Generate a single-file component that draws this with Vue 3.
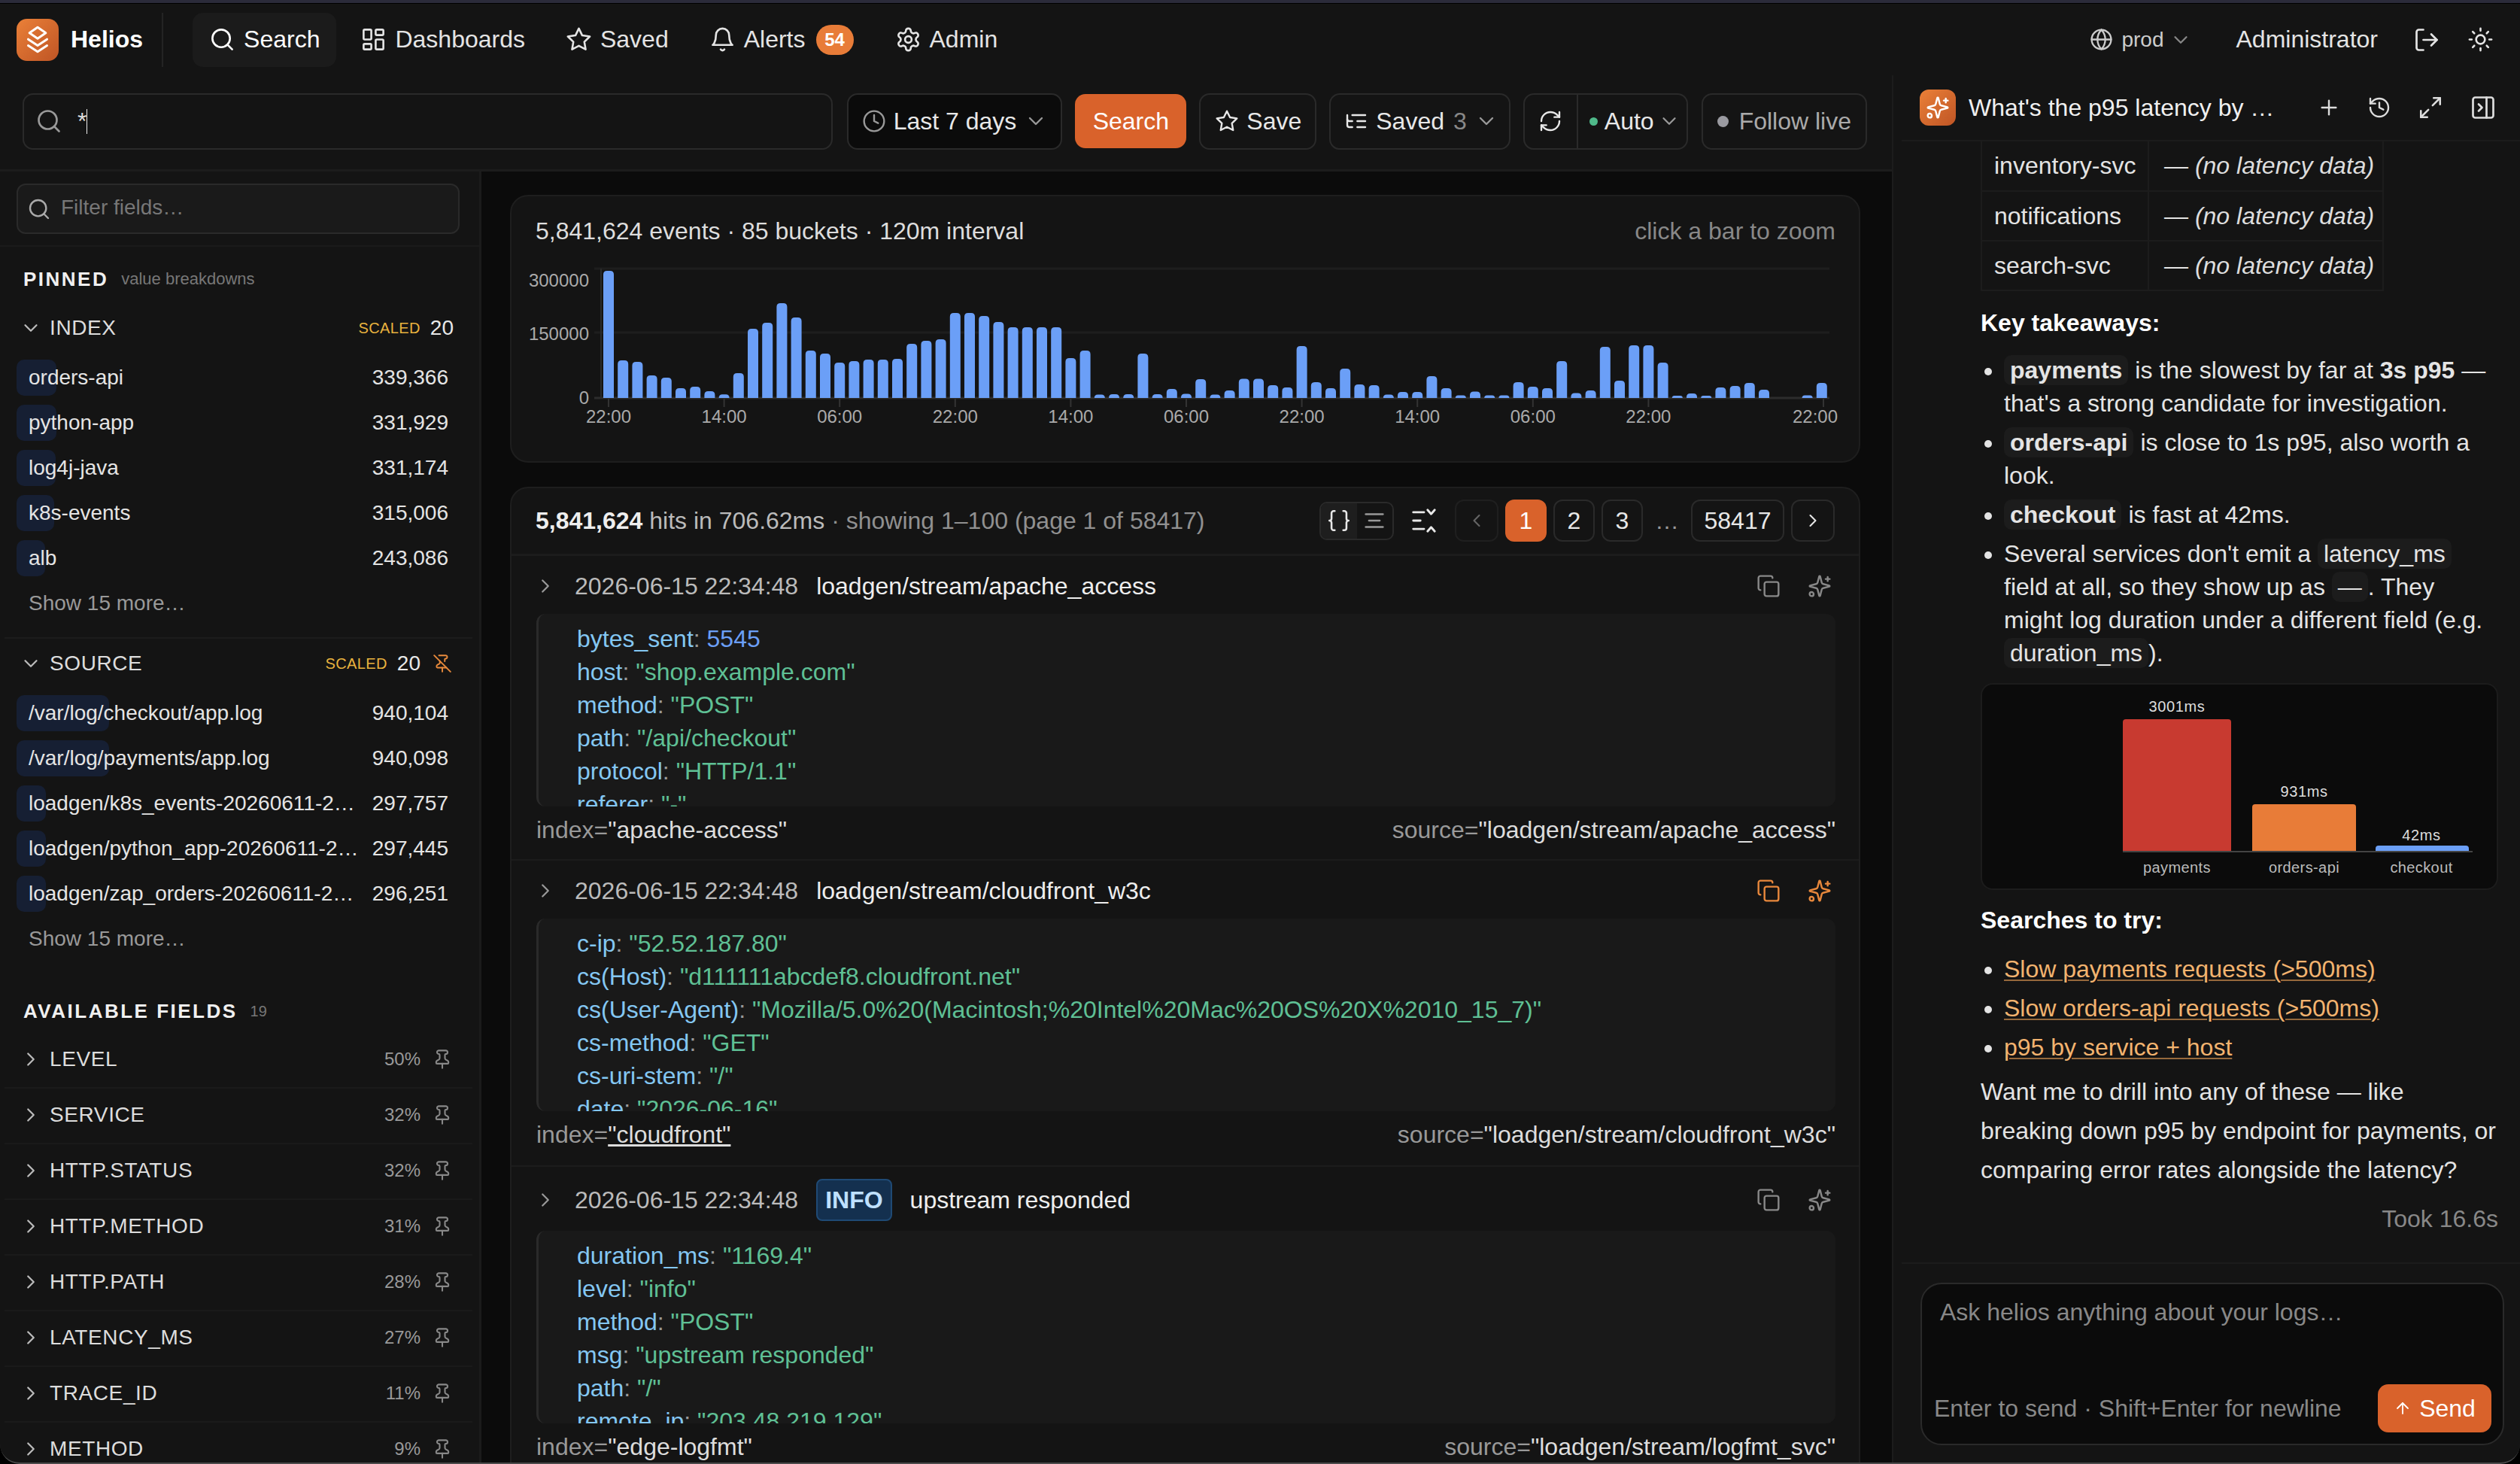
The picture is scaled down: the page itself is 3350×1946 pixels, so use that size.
<template>
    <div class="app">
        <div class="strip"></div>
        <header class="topbar">
            <div class="logo"><Icon name="layers" :size="40" color="#fff" /></div>
            <span class="brand">Helios</span>
            <span class="brand-sep"></span>
            <nav class="nav">
                <a v-for="item in navItems" :key="item.label" class="nav-item" :class="{ active: item.active }">
                    <Icon :name="item.icon" :size="35" />
                    <span>{{ item.label }}</span>
                    <span v-if="item.badge" class="nav-badge">{{ item.badge }}</span>
                </a>
            </nav>
            <div class="topbar-right">
                <span class="env"><Icon name="globe" :size="31" /><span class="env-name">prod</span><Icon name="chevronDown" :size="30" color="#888" /></span>
                <span class="user">Administrator</span>
                <Icon name="logout" :size="36" />
                <Icon name="sun" :size="35" />
            </div>
        </header>

        <div class="workspace">
            <div class="left">
                <div class="searchbar">
                    <div class="query">
                        <Icon name="search" :size="36" color="#999" />
                        <span class="query-text">*</span><span class="caret"></span>
                    </div>
                    <button class="btn dark"><Icon name="clock" :size="32" color="#999" />Last 7 days<Icon name="chevronDown" :size="32" color="#999" /></button>
                    <button class="btn primary">Search</button>
                    <button class="btn save"><Icon name="star" :size="32" />Save</button>
                    <button class="btn saved"><Icon name="listTree" :size="32" />Saved <span class="muted">3</span><Icon name="chevronDown" :size="32" color="#999" /></button>
                    <div class="btn-group">
                        <button class="btn-part"><Icon name="refresh" :size="32" /></button>
                        <button class="btn-part"><i class="dot green"></i>Auto<Icon name="chevronDown" :size="30" color="#999" class-name="auto-chev" /></button>
                    </div>
                    <button class="btn follow"><i class="dot grey"></i>Follow live</button>
                </div>

                <div class="columns">
                    <aside class="sidebar">
                        <div class="filter-wrap">
                            <div class="filter"><Icon name="search" :size="32" color="#aaa" /><span>Filter fields…</span></div>
                        </div>
                        <div class="side-title pinned"><b>PINNED</b><span>value breakdowns</span></div>
                        <template v-for="(group, gi) in pinnedGroups" :key="group.name">
                            <section class="group">
                                <div class="group-head">
                                    <Icon name="chevronDown" :size="30" color="#bbb" />
                                    <span class="field-name">{{ group.name }}</span>
                                    <span class="scaled">SCALED</span>
                                    <span class="group-count">20</span>
                                    <Icon v-if="group.unpin" name="pinOff" :size="26" color="#e88a3c" class-name="unpin" />
                                </div>
                                <div class="value-list">
                                    <div v-for="row in group.rows" :key="row.name" class="value-row">
                                        <i class="value-bar" :style="{ width: row.bar + 'px' }"></i>
                                        <span class="value-name">{{ row.name }}</span>
                                        <span class="value-count">{{ row.count }}</span>
                                    </div>
                                    <div class="show-more">Show 15 more…</div>
                                </div>
                            </section>
                            <div v-if="gi === 0" class="group-rule"></div>
                        </template>
                        <div class="side-title available"><b>AVAILABLE FIELDS</b><span class="small-count">19</span></div>
                        <div class="fields">
                            <div v-for="f in fields" :key="f.name" class="field-row">
                                <Icon name="chevronRight" :size="30" color="#bbb" />
                                <span class="field-name">{{ f.name }}</span>
                                <span class="field-pct">{{ f.pct }}</span>
                                <Icon name="pin" :size="28" color="#888" />
                            </div>
                        </div>
                    </aside>

                    <main class="main">
                        <section class="card histogram">
                            <div class="hist-head">
                                <span>5,841,624 events · 85 buckets · 120m interval</span>
                                <span class="hist-hint">click a bar to zoom</span>
                            </div>
                            <svg class="hist-svg" width="1791" height="262" viewBox="680 340 1791 262">
                                <line x1="790" x2="2432" y1="357" y2="357" stroke="#1e1e1e" stroke-width="3" />
                                <line x1="790" x2="2432" y1="442" y2="442" stroke="#1e1e1e" stroke-width="3" />
                                <line x1="799" x2="799" y1="357" y2="529" stroke="#2a2a2a" stroke-width="2" />
                                <line x1="790" x2="2432" y1="529" y2="529" stroke="#2c2c2c" stroke-width="3" />
                                <line v-for="t in xTicks" :key="'t' + t.tick" :x1="t.tick" :x2="t.tick" y1="530" y2="541" stroke="#333" stroke-width="2" />
                                <path v-for="(d, i) in barPaths" :key="i" :d="d" fill="#6b9ff7" />
                                <text v-for="l in yLabels" :key="l.text" x="783" :y="l.y" class="axis-text" text-anchor="end">{{ l.text }}</text>
                                <text v-for="t in xTicks" :key="'l' + t.tick" :x="t.x" y="562" class="axis-text" text-anchor="middle">{{ t.label }}</text>
                            </svg>
                        </section>

                        <section class="card results">
                            <div class="results-head">
                                <span class="hits"><b>5,841,624</b> hits in 706.62ms<span class="dim"> · showing 1–100 (page 1 of 58417)</span></span>
                                <div class="view-toggle">
                                    <span class="on"><Icon name="braces" :size="34" /></span>
                                    <span><Icon name="lines" :size="34" color="#999" /></span>
                                </div>
                                <Icon name="collapse" :size="38" class-name="collapse" />
                                <div class="pager">
                                    <span class="page arrow dim-arrow"><Icon name="chevronLeft" :size="28" color="#666" /></span>
                                    <span class="page current">1</span>
                                    <span class="page">2</span>
                                    <span class="page">3</span>
                                    <span class="gap">…</span>
                                    <span class="page wide">58417</span>
                                    <span class="page arrow"><Icon name="chevronRight" :size="28" /></span>
                                </div>
                            </div>

                            <article v-for="e in entries" :key="e.index" class="entry" :class="{ hover: e.hover, tall: e.level }">
                                <div class="entry-head">
                                    <Icon name="chevronRight" :size="30" color="#999" />
                                    <span class="stamp">2026-06-15 22:34:48</span>
                                    <span v-if="e.level" class="level">{{ e.level }}</span>
                                    <span class="entry-title">{{ e.title }}</span>
                                    <span class="entry-actions">
                                        <Icon name="copy" :size="32" />
                                        <Icon name="sparkle" :size="32" />
                                    </span>
                                </div>
                                <div class="entry-body">
                                    <div v-for="line in e.lines" :key="line[0]" class="kv">
                                        <span class="k">{{ line[0] }}</span><span class="colon">: </span><span :class="line[2] ? 'num' : 'str'">{{ line[1] }}</span>
                                    </div>
                                </div>
                                <div class="entry-foot">
                                    <span>index=<em class="idx">"{{ e.index }}"</em></span>
                                    <span>source=<em>"{{ e.source }}"</em></span>
                                </div>
                            </article>
                        </section>
                    </main>
                </div>
            </div>

            <aside class="assistant">
                <div class="ai-head">
                    <div class="ai-logo"><Icon name="sparkle" :size="32" color="#fff" /></div>
                    <span class="ai-title">What's the p95 latency by …</span>
                    <span class="ai-tools">
                        <Icon name="plus" :size="32" />
                        <Icon name="history" :size="32" />
                        <Icon name="expand" :size="34" />
                        <Icon name="panelRight" :size="36" />
                    </span>
                </div>
                <div class="ai-body">
                    <table class="ai-table">
                        <tr v-for="s in noLatency" :key="s">
                            <td class="svc">{{ s }}</td>
                            <td class="nodata">— <em>(no latency data)</em></td>
                        </tr>
                    </table>
                    <h4 class="ai-h first">Key takeaways:</h4>
                    <ul class="ai-list">
                        <li><code class="strong">payments</code> is the slowest by far at <b>3s p95</b> — that's a strong candidate for investigation.</li>
                        <li><code class="strong">orders-api</code> is close to 1s p95, also worth a look.</li>
                        <li><code class="strong">checkout</code> is fast at 42ms.</li>
                        <li>Several services don't emit a <code>latency_ms</code> field at all, so they show up as <code>—</code>. They might log duration under a different field (e.g. <code>duration_ms</code>).</li>
                    </ul>
                    <div class="ai-chart">
                        <svg width="684" height="271" viewBox="2635 909 684 271">
                            <path d="M2822 1131V959a4 4 0 0 1 4-4H2962a4 4 0 0 1 4 4V1131Z" fill="#c83a30" />
                            <path d="M2994 1131V1072a4 4 0 0 1 4-4H3128a4 4 0 0 1 4 4V1131Z" fill="#e87c38" />
                            <path d="M3158 1131V1127a4 4 0 0 1 4-4H3278a4 4 0 0 1 4 4V1131Z" fill="#6b9ff7" />
                            <line x1="2822" x2="3287" y1="1131" y2="1131" stroke="#444" stroke-width="2" />
                            <text v-for="b in aiBars" :key="b.name" :x="b.x" :y="b.top" class="ai-val" text-anchor="middle">{{ b.value }}</text>
                            <text v-for="b in aiBars" :key="'n' + b.name" :x="b.x" y="1159" class="ai-cat" text-anchor="middle">{{ b.name }}</text>
                        </svg>
                    </div>
                    <h4 class="ai-h">Searches to try:</h4>
                    <ul class="ai-list links">
                        <li v-for="l in links" :key="l"><a>{{ l }}</a></li>
                    </ul>
                    <p class="ai-closing">Want me to drill into any of these — like breaking down p95 by endpoint for payments, or comparing error rates alongside the latency?</p>
                    <div class="took">Took 16.6s</div>
                </div>
                <div class="ai-compose">
                    <div class="composer">
                        <div class="placeholder">Ask helios anything about your logs…</div>
                        <div class="composer-foot">
                            <span>Enter to send · Shift+Enter for newline</span>
                            <button class="send"><Icon name="arrowUp" :size="24" />Send</button>
                        </div>
                    </div>
                </div>
            </aside>
        </div>
        <div class="frame"></div>
    </div>
</template>

<script setup>
import { h } from 'vue'

const icons = {
    layers: '<path d="M12 2 5.5 6.5 12 11l6.5-4.5z"/><path d="m4.5 11.5 7.5 5 7.5-5"/><path d="m4.5 16.5 7.5 5 7.5-5"/>',
    search: '<circle cx="11" cy="11" r="8"/><path d="m21 21-4.3-4.3"/>',
    dashboard: '<rect width="7" height="9" x="3" y="3" rx="1"/><rect width="7" height="5" x="14" y="3" rx="1"/><rect width="7" height="9" x="14" y="12" rx="1"/><rect width="7" height="5" x="3" y="16" rx="1"/>',
    star: '<polygon points="12 2 15.09 8.26 22 9.27 17 14.14 18.18 21.02 12 17.77 5.82 21.02 7 14.14 2 9.27 8.91 8.26"/>',
    bell: '<path d="M6 8a6 6 0 0 1 12 0c0 7 3 9 3 9H3s3-2 3-9"/><path d="M10.3 21a1.94 1.94 0 0 0 3.4 0"/>',
    gear: '<path d="M12.22 2h-.44a2 2 0 0 0-2 2v.18a2 2 0 0 1-1 1.73l-.43.25a2 2 0 0 1-2 0l-.15-.08a2 2 0 0 0-2.73.73l-.22.38a2 2 0 0 0 .73 2.73l.15.1a2 2 0 0 1 1 1.72v.51a2 2 0 0 1-1 1.74l-.15.09a2 2 0 0 0-.73 2.73l.22.38a2 2 0 0 0 2.73.73l.15-.08a2 2 0 0 1 2 0l.43.25a2 2 0 0 1 1 1.73V20a2 2 0 0 0 2 2h.44a2 2 0 0 0 2-2v-.18a2 2 0 0 1 1-1.73l.43-.25a2 2 0 0 1 2 0l.15.08a2 2 0 0 0 2.73-.73l.22-.39a2 2 0 0 0-.73-2.73l-.15-.08a2 2 0 0 1-1-1.74v-.5a2 2 0 0 1 1-1.74l.15-.09a2 2 0 0 0 .73-2.73l-.22-.38a2 2 0 0 0-2.73-.73l-.15.08a2 2 0 0 1-2 0l-.43-.25a2 2 0 0 1-1-1.73V4a2 2 0 0 0-2-2z"/><circle cx="12" cy="12" r="3"/>',
    globe: '<circle cx="12" cy="12" r="10"/><path d="M12 2a14.5 14.5 0 0 0 0 20 14.5 14.5 0 0 0 0-20"/><path d="M2 12h20"/>',
    chevronDown: '<path d="m6 9 6 6 6-6"/>',
    chevronRight: '<path d="m9 18 6-6-6-6"/>',
    chevronLeft: '<path d="m15 18-6-6 6-6"/>',
    logout: '<path d="M9 21H5a2 2 0 0 1-2-2V5a2 2 0 0 1 2-2h4"/><path d="m16 17 5-5-5-5"/><path d="M21 12H9"/>',
    sun: '<circle cx="12" cy="12" r="4"/><path d="M12 2v2"/><path d="M12 20v2"/><path d="m4.93 4.93 1.41 1.41"/><path d="m17.66 17.66 1.41 1.41"/><path d="M2 12h2"/><path d="M20 12h2"/><path d="m6.34 17.66-1.41 1.41"/><path d="m19.07 4.93-1.41 1.41"/>',
    clock: '<circle cx="12" cy="12" r="10"/><path d="M12 6v6l4 2"/>',
    listTree: '<path d="M21 12h-8"/><path d="M21 6H8"/><path d="M21 18h-8"/><path d="M3 6v4c0 1.1.9 2 2 2h3"/><path d="M3 10v6c0 1.1.9 2 2 2h3"/>',
    refresh: '<path d="M3 12a9 9 0 0 1 9-9 9.75 9.75 0 0 1 6.74 2.74L21 8"/><path d="M21 3v5h-5"/><path d="M21 12a9 9 0 0 1-9 9 9.75 9.75 0 0 1-6.74-2.74L3 16"/><path d="M8 16H3v5"/>',
    pin: '<path d="M12 17v5"/><path d="M9 10.76a2 2 0 0 1-1.11 1.79l-1.78.9A2 2 0 0 0 5 15.24V16a1 1 0 0 0 1 1h12a1 1 0 0 0 1-1v-.76a2 2 0 0 0-1.11-1.79l-1.78-.9A2 2 0 0 1 15 10.76V7a1 1 0 0 1 1-1 2 2 0 0 0 0-4H8a2 2 0 0 0 0 4 1 1 0 0 1 1 1z"/>',
    pinOff: '<path d="M12 17v5"/><path d="M15 9.34V7a1 1 0 0 1 1-1 2 2 0 0 0 0-4H7.89"/><path d="m2 2 20 20"/><path d="M9 9v1.76a2 2 0 0 1-1.11 1.79l-1.78.9A2 2 0 0 0 5 15.24V16a1 1 0 0 0 1 1h11"/>',
    braces: '<path d="M8 3H7a2 2 0 0 0-2 2v5a2 2 0 0 1-2 2 2 2 0 0 1 2 2v5c0 1.1.9 2 2 2h1"/><path d="M16 21h1a2 2 0 0 0 2-2v-5c0-1.1.9-2 2-2a2 2 0 0 1-2-2V5a2 2 0 0 0-2-2h-1"/>',
    lines: '<path d="M4 6h16"/><path d="M7 12h10"/><path d="M4 18h16"/>',
    collapse: '<path d="M3 5h9"/><path d="M3 12h6"/><path d="M3 19h9"/><path d="m15 3 3 3.5L21 3"/><path d="m15 21 3-3.5 3 3.5"/>',
    copy: '<rect width="14" height="14" x="8" y="8" rx="2"/><path d="M4 16c-1.1 0-2-.9-2-2V4c0-1.1.9-2 2-2h10c1.1 0 2 .9 2 2"/>',
    sparkle: '<path d="M9.937 15.5A2 2 0 0 0 8.5 14.063l-6.135-1.582a.5.5 0 0 1 0-.962L8.5 9.936A2 2 0 0 0 9.937 8.5l1.582-6.135a.5.5 0 0 1 .963 0L14.063 8.5A2 2 0 0 0 15.5 9.937l6.135 1.581a.5.5 0 0 1 0 .964L15.5 14.063a2 2 0 0 0-1.437 1.437l-1.582 6.135a.5.5 0 0 1-.963 0z"/><path d="M20 3v4"/><path d="M22 5h-4"/><circle cx="4" cy="20" r="2"/>',
    plus: '<path d="M5 12h14"/><path d="M12 5v14"/>',
    history: '<path d="M3 12a9 9 0 1 0 9-9 9.75 9.75 0 0 0-6.74 2.74L3 8"/><path d="M3 3v5h5"/><path d="M12 7v5l4 2"/>',
    expand: '<path d="M15 3h6v6"/><path d="M9 21H3v-6"/><path d="m21 3-7 7"/><path d="m3 21 7-7"/>',
    panelRight: '<rect width="18" height="18" x="3" y="3" rx="2"/><path d="M15 3v18"/><path d="m8 9 3 3-3 3"/>',
    arrowUp: '<path d="M12 19V5"/><path d="m5 12 7-7 7 7"/>'
}

// small helper so every lucide-style glyph comes out the same way
const Icon = (props) => h('svg', {
    class: ['ico', props.className],
    width: props.size,
    height: props.size,
    viewBox: '0 0 24 24',
    fill: 'none',
    stroke: props.color || 'currentColor',
    'stroke-width': 1.8,
    'stroke-linecap': 'round',
    'stroke-linejoin': 'round',
    innerHTML: icons[props.name]
})
Icon.props = ['name', 'size', 'color', 'className']

const navItems = [
    { label: 'Search', icon: 'search', active: true },
    { label: 'Dashboards', icon: 'dashboard' },
    { label: 'Saved', icon: 'star' },
    { label: 'Alerts', icon: 'bell', badge: 54 },
    { label: 'Admin', icon: 'gear' }
]

const pinnedGroups = [
    {
        name: 'INDEX',
        rows: [
            { name: 'orders-api', count: '339,366', bar: 53 },
            { name: 'python-app', count: '331,929', bar: 53 },
            { name: 'log4j-java', count: '331,174', bar: 52 },
            { name: 'k8s-events', count: '315,006', bar: 50 },
            { name: 'alb', count: '243,086', bar: 38 }
        ]
    },
    {
        name: 'SOURCE',
        unpin: true,
        rows: [
            { name: '/var/log/checkout/app.log', count: '940,104', bar: 123 },
            { name: '/var/log/payments/app.log', count: '940,098', bar: 123 },
            { name: 'loadgen/k8s_events-20260611-2…', count: '297,757', bar: 39 },
            { name: 'loadgen/python_app-20260611-2…', count: '297,445', bar: 39 },
            { name: 'loadgen/zap_orders-20260611-2…', count: '296,251', bar: 39 }
        ]
    }
]

const fields = [
    { name: 'LEVEL', pct: '50%' },
    { name: 'SERVICE', pct: '32%' },
    { name: 'HTTP.STATUS', pct: '32%' },
    { name: 'HTTP.METHOD', pct: '31%' },
    { name: 'HTTP.PATH', pct: '28%' },
    { name: 'LATENCY_MS', pct: '27%' },
    { name: 'TRACE_ID', pct: '11%' },
    { name: 'METHOD', pct: '9%' }
]

// bar heights in px, read off the histogram
const heights = [169, 50, 48, 30, 27, 13, 15, 9, 4.7, 33, 92, 100, 126, 107, 63, 59, 47, 49, 51, 51, 52, 72, 76, 78, 113, 113, 109, 101, 94, 94, 94, 94, 53, 63, 4.5, 5, 5, 59, 5, 12, 5.5, 25, 4.5, 10, 25.5, 25.5, 17, 14, 69, 21, 13, 39, 18, 17, 4.5, 8, 8, 29, 13, 3.5, 8.5, 3.5, 3.5, 21, 15, 13, 49, 6.5, 10, 68, 23, 70, 70, 47, 3, 6, 3, 14, 16, 20, 11, 0, 0, 3.5, 20]
const barPaths = heights.map((bh, i) => {
    const x = 802 + i * 19.2
    const top = 529 - bh
    const r = Math.min(5, bh)
    return `M${x} 529V${top + r}Q${x} ${top} ${x + r} ${top}H${x + 14 - r}Q${x + 14} ${top} ${x + 14} ${top + r}V529Z`
})
const yLabels = [{ text: '300000', y: 381 }, { text: '150000', y: 452 }, { text: '0', y: 537 }]
const xTicks = ['22:00', '14:00', '06:00', '22:00', '14:00', '06:00', '22:00', '14:00', '06:00', '22:00', '22:00'].map((label, i) => {
    const tick = i < 10 ? 809 + i * 153.6 : 2424
    return { label, tick, x: i < 10 ? tick : 2413 }
})

const entries = [
    {
        title: 'loadgen/stream/apache_access',
        index: 'apache-access',
        source: 'loadgen/stream/apache_access',
        lines: [['bytes_sent', '5545', true], ['host', '"shop.example.com"'], ['method', '"POST"'], ['path', '"/api/checkout"'], ['protocol', '"HTTP/1.1"'], ['referer', '"-"']]
    },
    {
        title: 'loadgen/stream/cloudfront_w3c',
        index: 'cloudfront',
        source: 'loadgen/stream/cloudfront_w3c',
        hover: true,
        lines: [['c-ip', '"52.52.187.80"'], ['cs(Host)', '"d111111abcdef8.cloudfront.net"'], ['cs(User-Agent)', '"Mozilla/5.0%20(Macintosh;%20Intel%20Mac%20OS%20X%2010_15_7)"'], ['cs-method', '"GET"'], ['cs-uri-stem', '"/"'], ['date', '"2026-06-16"']]
    },
    {
        title: 'upstream responded',
        level: 'INFO',
        index: 'edge-logfmt',
        source: 'loadgen/stream/logfmt_svc',
        lines: [['duration_ms', '"1169.4"'], ['level', '"info"'], ['method', '"POST"'], ['msg', '"upstream responded"'], ['path', '"/"'], ['remote_ip', '"203.48.219.129"']]
    }
]

const noLatency = ['inventory-svc', 'notifications', 'search-svc']
const aiBars = [
    { name: 'payments', value: '3001ms', x: 2894, top: 945 },
    { name: 'orders-api', value: '931ms', x: 3063, top: 1058 },
    { name: 'checkout', value: '42ms', x: 3219, top: 1116 }
]
const links = ['Slow payments requests (>500ms)', 'Slow orders-api requests (>500ms)', 'p95 by service + host']
</script>

<style scoped>
* {
    box-sizing: border-box;
}

.app {
    position: relative;
    width: 3350px;
    height: 1946px;
    display: flex;
    flex-direction: column;
    overflow: hidden;
    background: #141414;
    color: #e8e8e8;
    font-family: "Liberation Sans", Arial, sans-serif;
    font-size: 32px;
    border-radius: 0 0 26px 26px;
}

.frame {
    position: absolute;
    inset: 0;
    pointer-events: none;
    border-bottom: 2px solid #4a4a4a;
    border-radius: 0 0 26px 26px;
}

.strip {
    height: 5px;
    flex: none;
    background: #2b2b3a;
    border-bottom: 1px solid #000;
}

.ico {
    flex: none;
    display: block;
}

.topbar {
    height: 95px;
    flex: none;
    display: flex;
    align-items: center;
    padding: 0 35px 0 22px;
    color: #e4e4e4;
}

.logo {
    width: 56px;
    height: 56px;
    border-radius: 14px;
    background: linear-gradient(135deg, #ea8038, #bf5525);
    display: flex;
    align-items: center;
    justify-content: center;
}

.brand {
    margin-left: 16px;
    font-weight: 700;
    color: #fff;
}

.brand-sep {
    width: 2px;
    height: 72px;
    margin: 0 39px 0 25px;
    background: #242424;
}

.nav {
    display: flex;
    align-items: center;
    gap: 10px;
}

.nav-item {
    height: 72px;
    display: flex;
    align-items: center;
    gap: 11px;
    padding: 0 22px;
    border-radius: 14px;
}

.nav-item.active {
    background: #1b1b1b;
    color: #fff;
}

.nav-badge {
    min-width: 50px;
    height: 40px;
    margin: 0 1px 0 3px;
    padding: 0 10px;
    border-radius: 20px;
    background: #e87c38;
    color: #fff;
    font-size: 24px;
    font-weight: 700;
    text-align: center;
    line-height: 40px;
}

.topbar-right {
    margin-left: auto;
    display: flex;
    align-items: center;
    gap: 36px;
}

.env {
    display: flex;
    align-items: center;
    gap: 11px;
    color: #ccc;
    margin-right: 23px;
}

.env-name {
    font-size: 28px;
    margin-right: -4px;
}

.user {
    margin-right: 11px;
}

.workspace {
    flex: 1;
    min-height: 0;
    display: flex;
}

.left {
    width: 2515px;
    flex: none;
    display: flex;
    flex-direction: column;
}

.searchbar {
    height: 128px;
    flex: none;
    display: flex;
    align-items: center;
    gap: 17px;
    padding: 0 33px 3px 30px;
    border-bottom: 3px solid #1c1c1c;
}

.query {
    flex: 1;
    height: 75px;
    margin-right: 2px;
    display: flex;
    align-items: center;
    padding-left: 15px;
    border: 2px solid #2a2a2a;
    border-radius: 14px;
    background: #141414;
}

.query-text {
    margin-left: 20px;
    color: #ddd;
}

.caret {
    width: 1px;
    height: 33px;
    background: #eee;
}

.btn {
    height: 75px;
    display: flex;
    align-items: center;
    gap: 10px;
    padding: 0 17px 0 18px;
    border: 2px solid #2a2a2a;
    border-radius: 14px;
    background: #141414;
    color: #e8e8e8;
    font-family: inherit;
    font-size: 32px;
}

.btn.dark {
    background: #0b0b0b;
}

.btn.primary {
    width: 148px;
    height: 72px;
    justify-content: center;
    border: none;
    padding: 0;
    background: #d9622b;
    color: #fff;
}

.btn.save {
    padding: 0 18px 0 19px;
}

.btn.saved {
    padding: 0 14px 0 18px;
}

.btn.follow {
    gap: 14px;
    margin-left: 1px;
    padding: 0 19px;
    color: #aaa;
}

.muted {
    color: #888;
    margin-left: 2px;
}

.btn-group {
    height: 75px;
    display: flex;
    border: 2px solid #2a2a2a;
    border-radius: 14px;
}

.btn-part {
    display: flex;
    align-items: center;
    gap: 9px;
    padding: 0 8px 0 15px;
    border: none;
    background: none;
    color: #e8e8e8;
    font-family: inherit;
    font-size: 32px;
}

.btn-part:first-child {
    width: 71px;
    justify-content: center;
    padding: 0;
    border-right: 2px solid #2a2a2a;
}

.btn-part .auto-chev {
    margin-left: -4px;
}

.dot {
    flex: none;
    display: inline-block;
    border-radius: 50%;
}

.dot.green {
    width: 11px;
    height: 11px;
    background: #4fb98a;
}

.dot.grey {
    width: 15px;
    height: 15px;
    background: #9a9aa0;
}

.columns {
    flex: 1;
    min-height: 0;
    display: flex;
}

.sidebar {
    width: 640px;
    flex: none;
    overflow: hidden;
    border-right: 3px solid #1b1b1b;
    font-size: 28px;
}

.filter-wrap {
    height: 100px;
    padding: 16px 26px 0 22px;
    border-bottom: 2px solid #1a1a1a;
}

.filter {
    height: 67px;
    display: flex;
    align-items: center;
    gap: 13px;
    padding: 0 0 3px 12px;
    border: 2px solid #2a2a2a;
    border-radius: 12px;
    background: #1a1a1a;
    color: #777;
}

.filter .ico {
    margin-top: 3px;
}

.side-title {
    height: 44px;
    display: flex;
    align-items: center;
    gap: 17px;
    padding-left: 31px;
}

.side-title b {
    font-size: 26px;
    font-weight: 700;
    letter-spacing: 2.5px;
    color: #f0f0f0;
}

.side-title span {
    font-size: 22px;
    color: #777;
}

.side-title .small-count {
    font-size: 20px;
}

.pinned {
    margin-top: 21px;
}

.available {
    margin-top: 44px;
}

.group {
    margin-top: 3px;
}

.pinned + .group {
    margin-top: 13px;
}

.group-rule {
    height: 2px;
    margin: 15px 9px 0 6px;
    background: #1c1c1c;
}

.group-head {
    height: 60px;
    display: flex;
    align-items: center;
    padding: 0 34px 0 26px;
}

.field-name {
    margin-left: 10px;
    letter-spacing: .6px;
    color: #ddd;
}

.scaled {
    margin-left: auto;
    font-size: 20px;
    letter-spacing: .4px;
    color: #e8b23e;
}

.group-count {
    margin-left: 13px;
    color: #e8e8e8;
}

.group-head .unpin {
    margin-left: 16px;
    margin-right: 2px;
}

.value-list {
    margin-top: 6px;
}

.value-row {
    position: relative;
    height: 60px;
    margin: 0 27px 0 22px;
    padding: 0 14px 0 16px;
    display: flex;
    align-items: center;
    justify-content: space-between;
}

.value-bar {
    position: absolute;
    left: 0;
    top: 6px;
    height: 48px;
    border-radius: 10px;
    background: #161f33;
}

.value-name,
.value-count {
    position: relative;
    color: #e4e4e4;
    white-space: nowrap;
}

.show-more {
    height: 60px;
    padding-left: 38px;
    line-height: 60px;
    color: #999;
}

.fields {
    margin-top: 7px;
}

.field-row {
    height: 74px;
    margin: 0 9px 0 6px;
    padding: 0 26px 2px 20px;
    display: flex;
    align-items: center;
    border-bottom: 2px solid #1a1a1a;
}

.field-pct {
    margin-left: auto;
    margin-right: 15px;
    font-size: 24px;
    color: #999;
}

.main {
    flex: 1;
    min-width: 0;
    padding: 31px 42px 0 38px;
    background: #0b0b0b;
    overflow: hidden;
}

.card {
    border: 2px solid #1e1e1e;
    border-radius: 24px;
    background: #141414;
}

.histogram {
    height: 356px;
    margin-bottom: 32px;
}

.hist-head {
    height: 79px;
    padding: 14px 31px 0 32px;
    display: flex;
    justify-content: space-between;
    align-items: center;
    color: #ddd;
}

.hist-hint {
    color: #888;
}

.hist-svg {
    display: block;
}

.axis-text {
    font-size: 24px;
    fill: #aaa;
    font-family: "Liberation Sans", Arial, sans-serif;
}

.results {
    height: 1400px;
}

.results-head {
    height: 90px;
    display: flex;
    align-items: center;
    padding: 0 32px 1px;
    border-bottom: 3px solid #1c1c1c;
}

.hits {
    color: #bbb;
    margin-right: auto;
}

.hits b {
    color: #eee;
    font-weight: 700;
}

.dim {
    color: #909090;
}

.view-toggle {
    display: flex;
    width: 99px;
    height: 51px;
    border: 2px solid #2a2a2a;
    border-radius: 10px;
    overflow: hidden;
}

.view-toggle span {
    flex: 1;
    display: flex;
    align-items: center;
    justify-content: center;
}

.view-toggle .on {
    background: #1e1e1e;
}

.results-head .collapse {
    margin-left: 21px;
    margin-right: 22px;
}

.pager {
    display: flex;
    align-items: center;
    gap: 9px;
}

.page {
    min-width: 55px;
    height: 56px;
    display: flex;
    align-items: center;
    justify-content: center;
    border: 2px solid #2a2a2a;
    border-radius: 12px;
}

.page.current {
    border: none;
    background: #d9622b;
    color: #fff;
}

.page.wide {
    width: 124px;
}

.page.arrow {
    width: 58px;
}

.dim-arrow {
    border-color: #1f1f1f;
}

.gap {
    width: 46px;
    text-align: center;
    color: #999;
}

.entry {
    height: 405px;
    border-bottom: 2px solid #1c1c1c;
}

.entry + .entry {
    height: 407px;
}

.entry-head {
    height: 77px;
    display: flex;
    align-items: center;
    padding: 3px 36px 0 30px;
}

.stamp {
    margin-left: 24px;
    color: #bbb;
}

.level {
    height: 56px;
    margin-left: 24px;
    padding: 0 10px;
    display: flex;
    align-items: center;
    border: 2px solid #1f4a75;
    border-radius: 8px;
    background: #14304f;
    color: #bfe0ff;
    font-weight: 700;
}

.entry.tall .entry-head {
    height: 85px;
}

.entry-title {
    margin-left: 24px;
    color: #eee;
}

.entry-actions {
    margin-left: auto;
    display: flex;
    align-items: center;
    gap: 36px;
    color: #888;
}

.entry.hover .entry-actions {
    color: #e8883c;
}

.entry.hover .idx {
    text-decoration: underline;
}

.entry-body {
    height: 256px;
    margin: 0 31px 0 33px;
    padding: 11px 0 0 51px;
    overflow: hidden;
    border-left: 3px solid #2a2a2a;
    border-radius: 12px;
    background: #191919;
}

.kv {
    height: 44px;
    line-height: 44px;
    white-space: nowrap;
}

.k {
    color: #84c7f2;
}

.colon {
    color: #999;
}

.str {
    color: #5fc095;
}

.num {
    color: #6b9ff7;
}

.entry-foot {
    display: flex;
    justify-content: space-between;
    margin: 13px 31px 0 33px;
    color: #999;
}

.entry-foot em {
    font-style: normal;
    color: #ddd;
}

.assistant {
    flex: 1;
    min-width: 0;
    display: flex;
    flex-direction: column;
    border-left: 2px solid #1c1c1c;
}

.ai-head {
    height: 88px;
    flex: none;
    margin-left: 11px;
    padding: 0 31px 0 24px;
    display: flex;
    align-items: center;
    border-bottom: 2px solid #1c1c1c;
}

.ai-logo {
    width: 48px;
    height: 48px;
    border-radius: 12px;
    background: linear-gradient(135deg, #ea8038, #bf5525);
    display: flex;
    align-items: center;
    justify-content: center;
}

.ai-title {
    margin-left: 17px;
    color: #f0f0f0;
}

.ai-tools {
    margin-left: auto;
    display: flex;
    align-items: center;
    gap: 35px;
    color: #ddd;
}

.ai-body {
    flex: 1;
    min-height: 0;
    padding: 0 29px 0 116px;
    overflow: hidden;
    color: #e4e4e4;
}

.ai-table {
    border-collapse: collapse;
    width: 536px;
}

.ai-table td {
    height: 66px;
    padding: 0 0 0 20px;
    border: 2px solid #1c1c1c;
    border-top: none;
    white-space: nowrap;
}

.ai-table .svc {
    width: 222px;
    padding-left: 16px;
}

.nodata em {
    color: #ddd;
}

.ai-h {
    margin: 18px 0 0;
    line-height: 44px;
    font-size: 32px;
    font-weight: 700;
    color: #fff;
}

.ai-h.first {
    margin-top: 20px;
}

.ai-list {
    margin: 19px 0 0;
    padding: 0 0 0 31px;
}

.ai-list.links {
    margin-top: 21px;
}

.ai-list li {
    line-height: 44px;
    margin-bottom: 8px;
}

.ai-list li:last-child {
    margin-bottom: 0;
}

code {
    padding: 2px 8px;
    border-radius: 10px;
    background: #1c1c1c;
    font-family: inherit;
    font-size: 32px;
}

code.strong {
    font-weight: 700;
}

.ai-list b {
    font-weight: 700;
}

.ai-chart {
    height: 275px;
    margin-top: 18px;
    border: 2px solid #1c1c1c;
    border-radius: 16px;
    background: #0b0b0b;
}

.ai-chart svg {
    display: block;
}

.ai-val {
    font-size: 20px;
    letter-spacing: .6px;
    fill: #ddd;
    font-family: "Liberation Sans", Arial, sans-serif;
}

.ai-cat {
    font-size: 20px;
    letter-spacing: .4px;
    fill: #bbb;
    font-family: "Liberation Sans", Arial, sans-serif;
}

.links a {
    color: #f2b36f;
    text-decoration: underline;
    text-decoration-color: #96693c;
    text-underline-offset: 3px;
    text-decoration-thickness: 2px;
}

.ai-closing {
    margin: 11px 0 0;
    line-height: 52px;
}

.took {
    margin-top: 17px;
    line-height: 44px;
    text-align: right;
    color: #888;
}

.ai-compose {
    height: 268px;
    flex: none;
    margin-left: 11px;
    padding: 25px 21px 25px 25px;
    border-top: 2px solid #1c1c1c;
}

.composer {
    height: 100%;
    display: flex;
    flex-direction: column;
    justify-content: space-between;
    border: 2px solid #2a2a2a;
    border-radius: 28px;
    background: #0b0b0b;
    color: #888;
}

.placeholder {
    padding: 18px 0 0 24px;
    line-height: 38px;
}

.composer-foot {
    display: flex;
    align-items: center;
    justify-content: space-between;
    padding: 0 15px 15px 16px;
}

.send {
    width: 151px;
    height: 64px;
    display: flex;
    align-items: center;
    justify-content: center;
    gap: 10px;
    border: none;
    border-radius: 14px;
    background: #d9622b;
    color: #fff;
    font-family: inherit;
    font-size: 32px;
}
</style>

<style>
html, body {
    margin: 0;
    background: #000;
}
</style>
